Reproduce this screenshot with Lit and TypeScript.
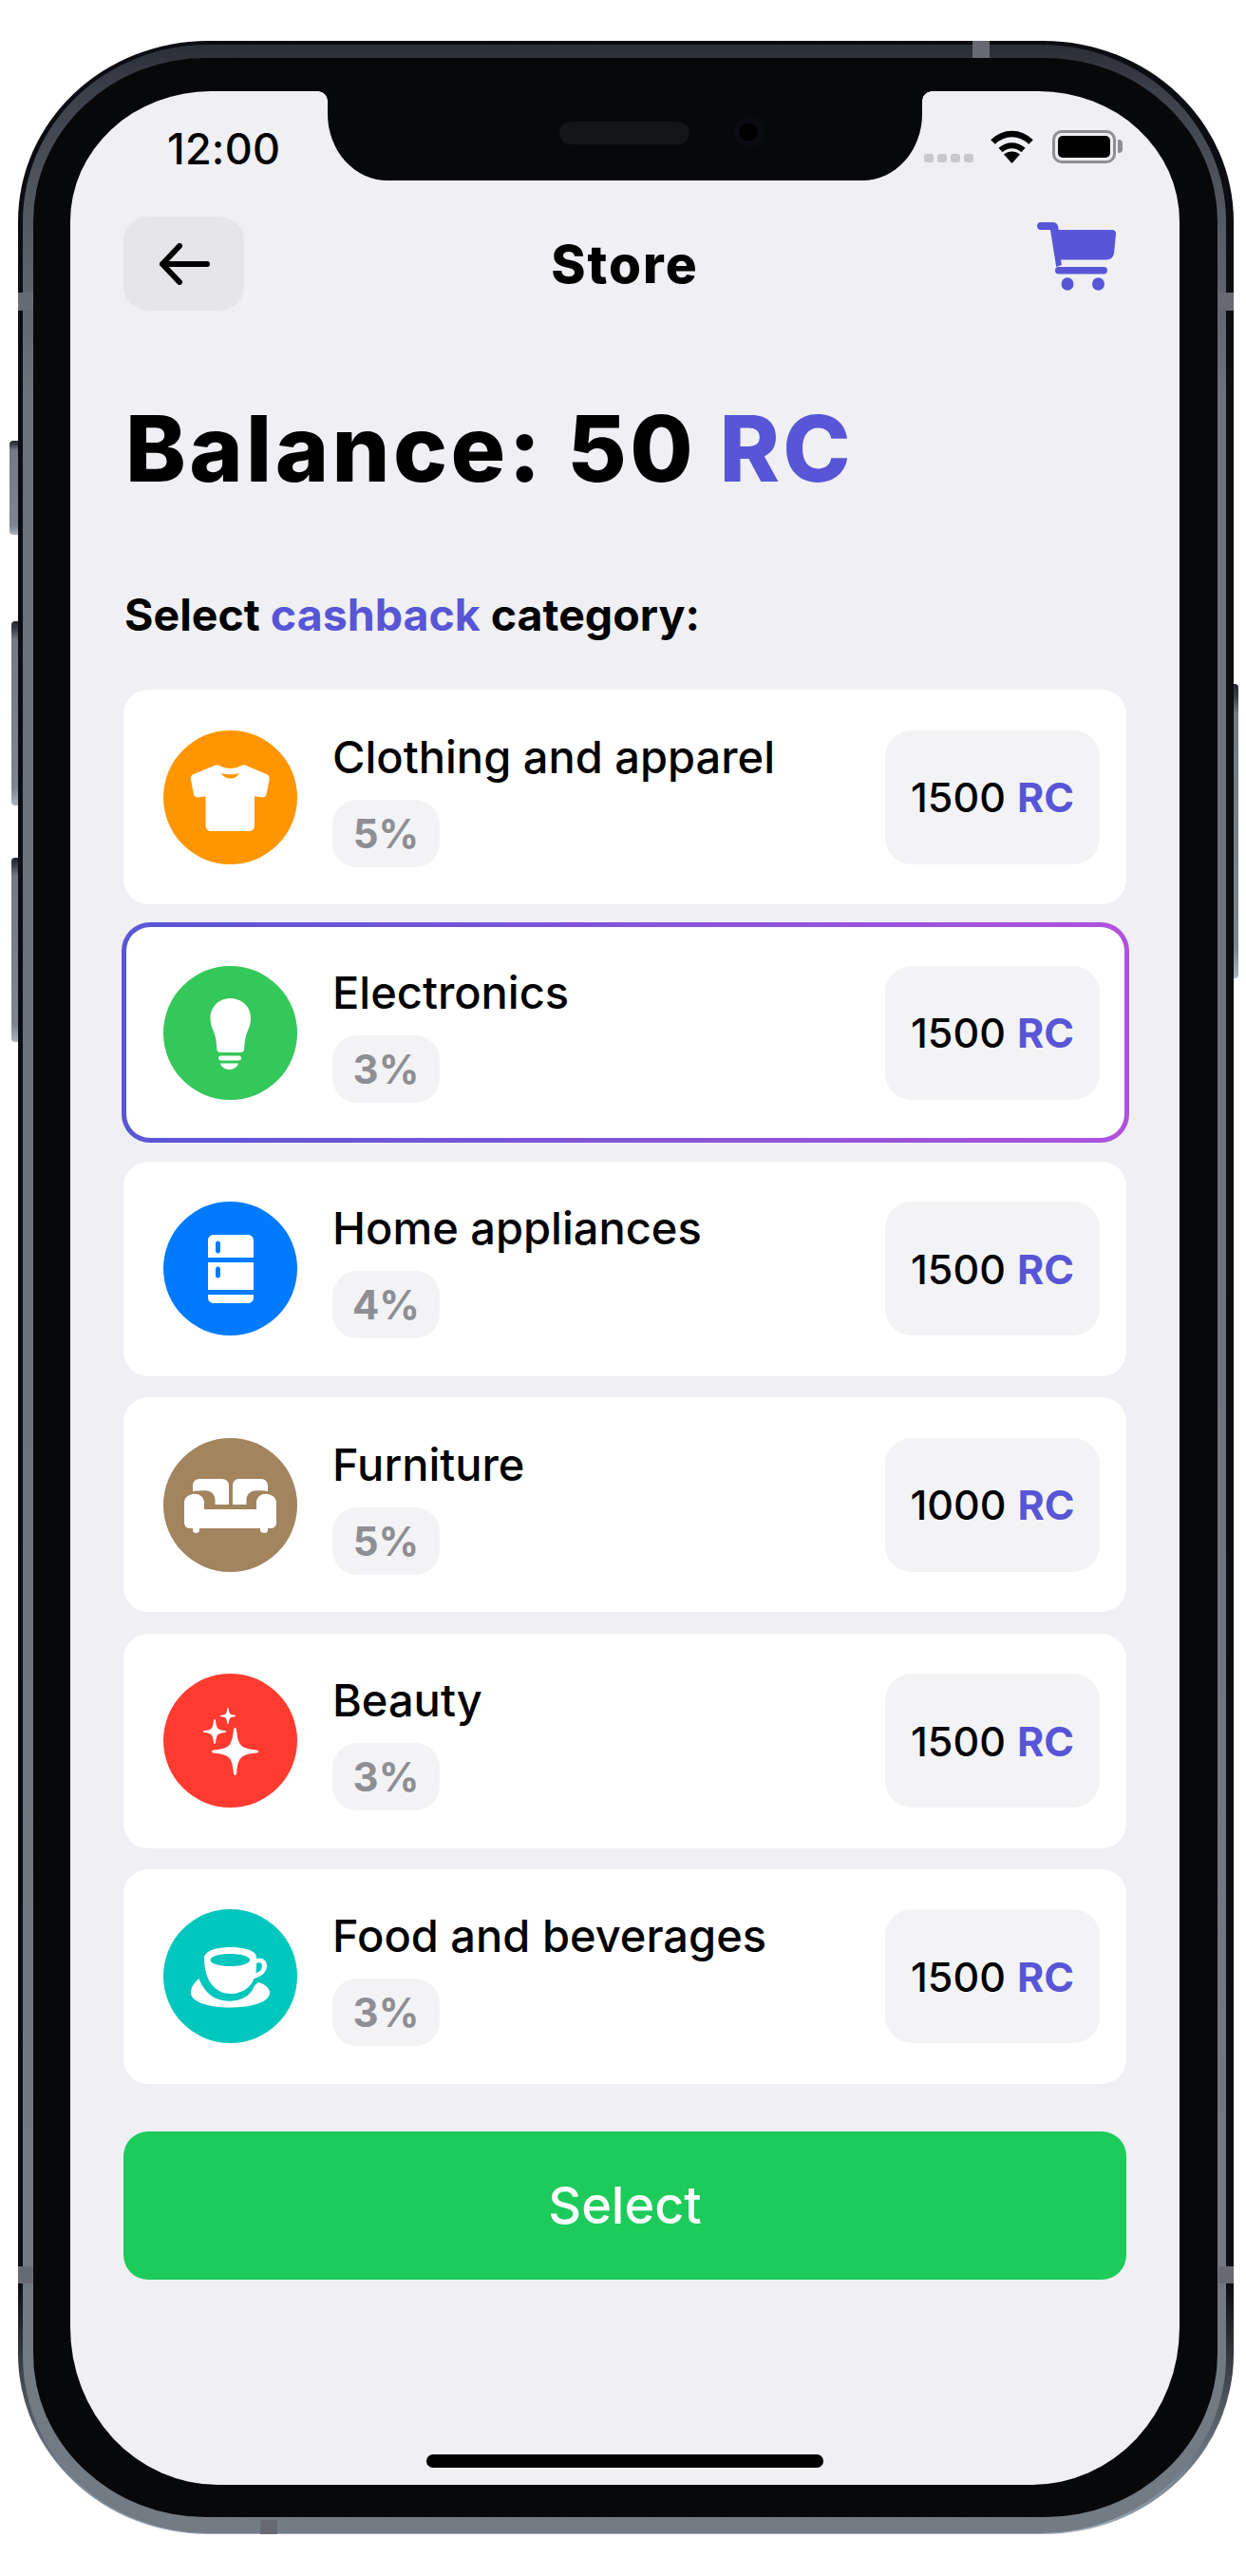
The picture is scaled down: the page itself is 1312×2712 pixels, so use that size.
import { LitElement, css, html } from 'lit';
import { customElement } from 'lit/decorators.js';

interface Category {
  name: string;
  percent: string;
  price: number;
  color: string;
  icon: unknown;
  selected?: boolean;
}

const SHIRT = html`<svg viewBox="0 0 141 141">
  <path fill="#fff" fill-rule="evenodd" d="M55 36.500c1.400-.5 2.600-.3 4 .6 3.500 2 7.400 2.900 11.500 2.900s8-.9 11.500-2.900c1.400-.9 2.600-1.100 4-.6l22.500 9.500c2.300 1 3.500 3 3.100 5.500l-3 15.500c-.5 2.500-2.500 4-5 3.500l-7.600-1.200v31.200c0 2.900-2.400 5.500-5.500 5.500H50c-3.100 0-5.500-2.600-5.500-5.500V69.300l-7.600 1.200c-2.500.5-4.500-1-5-3.500l-3-15.500c-.4-2.500.8-4.500 3.100-5.500zM61 45c2 3.800 5.600 5.700 9.500 5.700S78 48.800 80 45c-6 1.800-13 1.800-19 0z"/>
</svg>`;

const BULB = html`<svg viewBox="0 0 141 141">
  <path fill="#fff" d="M70.500 34c12 0 21.500 9 21.500 20.500 0 5-1 9-3 13.500-2.700 6-3.300 11-3.800 19-.1 2.400-1.300 4-3.700 4H60c-2.400 0-3.600-1.600-3.700-4-.5-8-1.100-13-3.800-19-2-4.500-3-8.500-3-13.500C49.500 43 58.500 34 70.500 34z"/>
  <rect x="58" y="94.500" width="24" height="5" rx="2.500" fill="#fff"/>
  <path fill="#fff" d="M60 102.500h19c-1 4-5 6.500-9.500 6.500s-8.500-2.500-9.500-6.500z"/>
</svg>`;

const FRIDGE = html`<svg viewBox="0 0 141 141">
  <path fill="#fff" fill-rule="evenodd" d="M47 59V41c0-3.500 2.500-6 6-6h36c3.500 0 6 2.500 6 6v18zM55 44v8c0 1.400 1 2.500 2.500 2.500S60 53.400 60 52v-8c0-1.400-1-2.500-2.500-2.500S55 42.600 55 44z"/>
  <path fill="#fff" fill-rule="evenodd" d="M47 64h48v29H47zM55 71v7c0 1.400 1 2.500 2.500 2.500S60 79.400 60 78v-7c0-1.400-1-2.500-2.500-2.500S55 69.600 55 71z"/>
  <path fill="#fff" d="M47 98h48v3c0 3.500-2.500 6-6 6H53c-3.500 0-6-2.500-6-6z"/>
</svg>`;

const SOFA = html`<svg viewBox="0 0 141 141">
  <path fill="#fff" d="M38 43h24c4 0 7 3 7 7v20H54.500v-5c0-5-3.500-9-8.500-9.500-3-.3-5-.3-15 .5v-6c0-4 3-7 7-7z"/>
  <path fill="#fff" d="M103 43H79c-3 0-6 3-6 7v20h14.500v-5c0-5 3.500-9 8.500-9.500 3-.3 5-.3 14 .5v-6c0-4-3-7-7-7z"/>
  <path fill="#fff" d="M31 59c6-1 11 2 12 8v8h55v-8c1-6 6-9 12-8 5.500 1 9 4 9 9v21c0 4-3 6-6 6h-3v2c0 2-1.500 3-3.500 3s-4.500-1-4.500-3v-2H38v2c0 2-1.500 3-3.500 3S31 99 31 97v-2h-3c-3 0-6-2-6-6V68c0-5 3.500-8 9-9z"/>
</svg>`;

const SPARKLES = html`<svg viewBox="0 0 141 141">
  <path fill="#fff" d="M75.500 57c1 0 1.300.8 1.500 2 1 9 2 13 4.500 16s7 4.500 16.500 5.500c1.400.2 2 .8 2 1.500s-.6 1.300-2 1.500c-9.500 1-14 2.500-16.500 5.500s-3.500 7-4.500 16c-.2 1.200-.5 2-1.500 2s-1.300-.8-1.500-2c-1-9-2-13-4.500-16s-7-4.500-16.500-5.500c-1.400-.2-2-.8-2-1.500s.6-1.300 2-1.500c9.500-1 14-2.500 16.500-5.500s3.500-7 4.500-16c.2-1.200.5-2 1.500-2z"/>
  <path fill="#fff" d="M54 48c.6 0 .9.500 1 1.200.5 4.500 1 6.800 2.300 8.300 1.300 1.500 3.500 2.200 7.700 2.600.7.100 1 .4 1 .9s-.3.800-1 .9c-4.200.4-6.400 1.100-7.700 2.600-1.300 1.500-1.800 3.800-2.300 8.300-.1.700-.4 1.200-1 1.200s-.9-.5-1-1.200c-.5-4.500-1-6.800-2.300-8.300-1.300-1.500-3.500-2.200-7.700-2.600-.7-.1-1-.4-1-.9s.3-.8 1-.9c4.200-.4 6.400-1.100 7.700-2.600 1.300-1.500 1.800-3.800 2.300-8.300.1-.7.400-1.200 1-1.200z"/>
  <path fill="#fff" d="M68 36c.4 0 .6.300.7.800.3 2.800.7 4.300 1.500 5.300.8 1 2.300 1.400 5 1.700.5.100.8.300.8.700s-.3.600-.8.700c-2.700.3-4.200.7-5 1.700-.8 1-1.200 2.500-1.500 5.300-.1.500-.3.800-.7.800s-.6-.3-.7-.8c-.3-2.800-.7-4.300-1.500-5.300-.8-1-2.300-1.400-5-1.700-.5-.1-.8-.3-.8-.7s.3-.6.800-.7c2.700-.3 4.200-.7 5-1.700.8-1 1.200-2.500 1.500-5.300.1-.5.300-.8.700-.8z"/>
</svg>`;

const CUP = html`<svg viewBox="0 0 141 141">
  <path fill="#fff" d="M37.500 73c3 8 8.500 16 16 20 10 5 24 5 33.500-1 3.500-2.200 6-5 8-9.500 1-2.200 3-4.500 5.500-5.500 7 2.500 11.500 6 11.500 11 0 9-17 15.500-41.500 15.500S29 97 29 88c0-6 3.500-11 8.500-15z"/>
  <path fill="#fff" fill-rule="evenodd" d="M43 52c0-8 12-12 27.500-12S98 44 98 50.500v1.500c5-2 11 1 11 7.500 0 7-6 11.500-13.500 13.500C92 83 82 89 70.500 89 54 89 43 74 43 52zM49.500 53.500c0 3.800 9.400 6.500 21 6.500s20.500-2.700 20.500-6.500-9-6.500-20.500-6.500-21 2.700-21 6.500zM98 57l-.5 10c4.500-1 6.500-4 6.500-7.500 0-3-3-4.500-6-2.500z"/>
</svg>`;

const CART = html`<svg class="cart" viewBox="0 0 83 72">
  <path fill="#5856d6" d="M3.500 0h13c2.800 0 4.800 1.500 5.500 4l.8 4H79c2.800 0 4.200 1.800 4 4.500l-1.800 19c-.5 5-3.500 8-8.200 8H25l.9 5.500-5.700 2L14 8H3.500C1.500 8 0 6.200 0 4s1.500-4 3.500-4z"/>
  <rect x="19" y="47" width="55" height="7.500" rx="3.700" fill="#5856d6"/>
  <ellipse cx="32" cy="65" rx="6.500" ry="6.700" fill="#5856d6"/>
  <ellipse cx="64.500" cy="65" rx="6.500" ry="6.700" fill="#5856d6"/>
</svg>`;

const CATEGORIES: Category[] = [
  { name: 'Clothing and apparel', percent: '5%', price: 1500, color: '#ff9500', icon: SHIRT },
  { name: 'Electronics', percent: '3%', price: 1500, color: '#34c759', icon: BULB, selected: true },
  { name: 'Home appliances', percent: '4%', price: 1500, color: '#007aff', icon: FRIDGE },
  { name: 'Furniture', percent: '5%', price: 1000, color: '#a2845e', icon: SOFA },
  { name: 'Beauty', percent: '3%', price: 1500, color: '#ff3b30', icon: SPARKLES },
  { name: 'Food and beverages', percent: '3%', price: 1500, color: '#00c7be', icon: CUP },
];

@customElement('app-root')
export class AppRoot extends LitElement {
  static styles = css`
    :host {
      display: block;
      width: 1312px;
      height: 2712px;
      background: #fff;
      font-family: Inter, 'Noto Sans', sans-serif;
      color: #000;
      overflow: hidden;
    }

    * {
      box-sizing: border-box;
    }

    .device {
      position: relative;
      width: 1312px;
      height: 2712px;
      padding: 43px 13px 44px 19px;
    }

    .side {
      position: absolute;
      background: linear-gradient(180deg, #23262b 0, #3a3e45 4%, #737a84 10%, #7d858f 90%, #a9b4bf 100%);
      border-radius: 4px 0 0 4px;
    }

    .side.mute {
      left: 10px;
      top: 464px;
      width: 9px;
      height: 99px;
    }

    .side.up {
      left: 12px;
      top: 654px;
      width: 7px;
      height: 194px;
    }

    .side.down {
      left: 12px;
      top: 903px;
      width: 7px;
      height: 194px;
    }

    .side.power {
      left: 1299px;
      top: 720px;
      width: 5px;
      height: 310px;
      border-radius: 0 4px 4px 0;
    }

    .frame {
      position: relative;
      height: 100%;
      padding: 4px 8px 1px 5px;
      border-radius: 200px / 190px;
      background: linear-gradient(180deg, #0b0d12 0, #0b0d12 90%, #8a97a5 99%, #a4b1bf 100%);
    }

    .band {
      height: 100%;
      padding: 14px 9px 17px 11px;
      border-radius: 195px / 186px;
      background: linear-gradient(180deg, #2a2e36 0, #3b414b 2%, #4f5660 6%, #6a727c 14%, #6a727c 50%, #737b85 100%);
    }

    .bezel {
      height: 100%;
      padding: 35px 40px 34px 39px;
      border-radius: 182px / 172px;
      background: #07080a;
    }

    .cut {
      position: absolute;
      background: #666b73;
    }

    .screen {
      position: relative;
      height: 100%;
      padding: 0 56px;
      border-radius: 148px 148px 155px 155px / 137px 137px 166px 166px;
      background: #efeff4;
      overflow: hidden;
    }

    .notch {
      position: absolute;
      left: 271px;
      top: 0;
      width: 626px;
      height: 94px;
      background: #07080a;
      border-radius: 0 0 63px 63px / 0 0 70px 70px;
    }

    .notch::before,
    .notch::after {
      content: '';
      position: absolute;
      top: 0;
      width: 10px;
      height: 10px;
    }

    .notch::before {
      left: -10px;
      background: radial-gradient(circle at 0 100%, transparent 9.500px, #07080a 10px);
    }

    .notch::after {
      right: -10px;
      background: radial-gradient(circle at 100% 100%, transparent 9.500px, #07080a 10px);
    }

    .speaker {
      position: absolute;
      left: 244px;
      top: 32px;
      width: 137px;
      height: 24px;
      border-radius: 12px;
      background: #141517;
    }

    .camera {
      position: absolute;
      left: 427px;
      top: 27px;
      width: 32px;
      height: 32px;
      border-radius: 50%;
      background: radial-gradient(circle, #000 0, #000 40%, #0b0c12 44%, #0b0c12 100%);
    }

    .status {
      display: flex;
      align-items: flex-start;
      height: 132px;
      padding: 36px 0 0 46px;
      font-size: 45px;
      font-weight: 500;
      line-height: 50px;
    }

    .time {
      letter-spacing: 0.2px;
      flex: 1;
    }

    .status-right {
      display: flex;
      align-items: flex-end;
      height: 35px;
      margin: 5px 11px 0 0;
    }

    .dots {
      display: flex;
      gap: 4px;
      margin: 0 18px 1px 0;
    }

    .dots span {
      width: 10px;
      height: 9px;
      border-radius: 3px;
      background: #c7c7cc;
    }

    .wifi {
      width: 45px;
      height: 35px;
      margin-right: 20px;
    }

    .battery {
      position: relative;
      width: 67px;
      height: 35px;
      border: 3px solid #8e8e93;
      border-radius: 10px;
      padding: 3px;
    }

    .battery::before {
      content: '';
      display: block;
      height: 100%;
      background: #000;
      border-radius: 5px;
    }

    .battery::after {
      content: '';
      position: absolute;
      right: -10px;
      top: 7px;
      width: 5px;
      height: 14px;
      border-radius: 0 4px 4px 0;
      background: #8e8e93;
    }

    .nav {
      display: grid;
      grid-template-columns: 127px 1fr 127px;
      align-items: center;
      height: 99px;
    }

    .back {
      display: flex;
      align-items: center;
      justify-content: center;
      height: 99px;
      background: #e5e5ea;
      border-radius: 26px;
    }

    .back svg {
      width: 54px;
      height: 44px;
    }

    .title {
      text-align: center;
      font-size: 55px;
      font-weight: 800;
      letter-spacing: 2px;
      line-height: 60px;
    }

    .cart-wrap {
      display: flex;
      justify-content: flex-end;
      padding: 0 11px 16px 0;
    }

    .cart {
      width: 83px;
      height: 72px;
    }

    .balance {
      margin: 85px 0 0 2px;
      font-size: 96px;
      font-weight: 800;
      letter-spacing: 3.400px;
      line-height: 120px;
      white-space: nowrap;
    }

    .accent {
      color: #5856d6;
    }

    .label {
      margin: 88px 0 0 1px;
      font-size: 46.500px;
      font-weight: 700;
      line-height: 54px;
    }

    .list {
      display: flex;
      flex-direction: column;
      gap: 22.400px;
      margin-top: 52px;
    }

    .card {
      display: flex;
      align-items: center;
      height: 226px;
      padding: 0 28px 0 42px;
      background: #fff;
      border-radius: 26px;
    }

    .card.selected {
      height: 232px;
      margin: -3px -2.500px;
      padding: 0 25.500px 0 39.500px;
      border: 5px solid transparent;
      border-radius: 30px;
      background: linear-gradient(#fff, #fff) padding-box,
        linear-gradient(90deg, #5856d6, #af52de) border-box;
    }

    .badge {
      display: flex;
      align-items: center;
      justify-content: center;
      flex: none;
      width: 141px;
      height: 141px;
      border-radius: 50%;
    }

    .badge svg {
      width: 141px;
      height: 141px;
    }

    .info {
      flex: 1;
      margin-left: 37px;
      padding-top: 3px;
    }

    .name {
      font-size: 47px;
      font-weight: 500;
      line-height: 56px;
      margin-bottom: 17px;
    }

    .pill {
      display: flex;
      align-items: center;
      justify-content: center;
      width: 113px;
      height: 71px;
      border-radius: 26px;
      background: #f3f3f5;
      color: #8e8e93;
      font-size: 42px;
      font-weight: 700;
    }

    .price {
      display: flex;
      align-items: center;
      justify-content: center;
      gap: 12px;
      flex: none;
      width: 226px;
      height: 141px;
      border-radius: 28px;
      background: #f3f3f5;
      font-size: 43px;
      font-weight: 500;
    }

    .price b {
      color: #5856d6;
      font-weight: 700;
    }

    .select {
      display: flex;
      align-items: center;
      justify-content: center;
      width: 100%;
      height: 156px;
      margin-top: 50px;
      border: 0;
      border-radius: 26px;
      background: #1ccb5a;
      color: #fff;
      font: 500 54px Inter, sans-serif;
    }

    .home {
      position: absolute;
      left: 375px;
      bottom: 18px;
      width: 418px;
      height: 14px;
      border-radius: 7px;
      background: #000;
    }
  `;

  render() {
    return html`
      <div class="device">
        <div class="side mute"></div>
        <div class="side up"></div>
        <div class="side down"></div>
        <div class="side power"></div>
        <div class="frame">
          <div class="band">
            <div class="bezel">${this.renderScreen()}</div>
          </div>
          ${this.renderCuts()}
        </div>
      </div>
    `;
  }

  private renderCuts() {
    const cuts = [
      [0, 265, 16, 19],
      [1264, 265, 16, 19],
      [0, 2343, 16, 18],
      [1264, 2343, 16, 18],
      [1005, 0, 18, 18],
      [255, 2610, 18, 15],
    ];
    return cuts.map(
      ([x, y, w, h]) =>
        html`<div class="cut" style="left:${x}px;top:${y}px;width:${w}px;height:${h}px"></div>`,
    );
  }

  private renderScreen() {
    return html`
      <div class="screen">
        <div class="status">
          <span class="time">12:00</span>
          <div class="status-right">
            <div class="dots"><span></span><span></span><span></span><span></span></div>
            <svg class="wifi" viewBox="0 0 45 35">
              <path fill="none" stroke="#000" stroke-width="6.500" d="M2.500 12.500C14 1 31 1 42.500 12.500"/>
              <path fill="none" stroke="#000" stroke-width="6" d="M10.500 21c7-6.500 17-6.500 24 0"/>
              <path fill="#000" d="M22.500 35l-8.500-9.500c5-4 12-4 17 0z"/>
            </svg>
            <div class="battery"></div>
          </div>
        </div>
        <div class="nav">
          <div class="back">
            <svg viewBox="0 0 54 44">
              <path fill="none" stroke="#000" stroke-width="6" stroke-linecap="round" stroke-linejoin="round" d="M22 3L4 22l18 19M4 22h47"/>
            </svg>
          </div>
          <div class="title">Store</div>
          <div class="cart-wrap">${CART}</div>
        </div>
        <div class="balance">Balance: 50 <span class="accent">RC</span></div>
        <div class="label">Select <span class="accent">cashback</span> category:</div>
        <div class="list">${CATEGORIES.map((c) => this.renderCard(c))}</div>
        <button class="select">Select</button>
        <div class="notch">
          <div class="speaker"></div>
          <div class="camera"></div>
        </div>
        <div class="home"></div>
      </div>
    `;
  }

  private renderCard(c: Category) {
    return html`
      <div class="card ${c.selected ? 'selected' : ''}">
        <div class="badge" style="background:${c.color}">${c.icon}</div>
        <div class="info">
          <div class="name">${c.name}</div>
          <div class="pill">${c.percent}</div>
        </div>
        <div class="price">${c.price} <b>RC</b></div>
      </div>
    `;
  }
}
